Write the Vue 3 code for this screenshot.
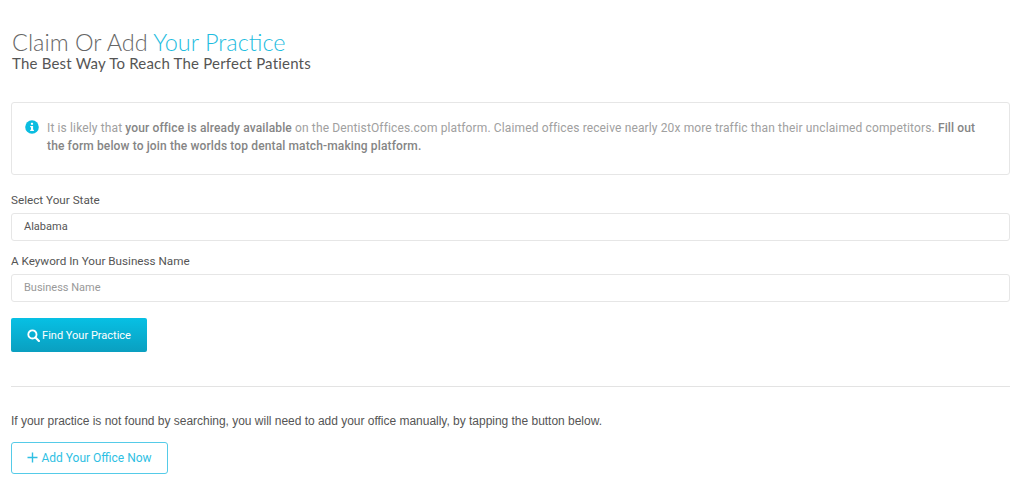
<template>
  <main class="page">
    <header class="head">
      <h1>Claim Or Add <span>Your Practice</span></h1>
      <h2>The Best Way To Reach The Perfect Patients</h2>
    </header>
    <section class="note">
      <svg class="info" viewBox="0 0 14 14" width="14" height="14" aria-hidden="true">
        <circle cx="7" cy="7" r="6.8" fill="#0bbde0" />
        <rect x="5.9" y="2.8" width="2.2" height="2" rx=".6" fill="#fff" />
        <path d="M5.2 6h2.9v3.7h.8v1.2H5.2V9.7h.8V7.2h-.8z" fill="#fff" />
      </svg>
      <p>It is likely that <b>your office is already available</b> on the DentistOffices.com platform. Claimed offices receive nearly 20x more traffic than their unclaimed competitors. <b>Fill out the form below to join the worlds top dental match-making platform.</b></p>
    </section>
    <label class="field">
      <span>Select Your State</span>
      <div class="input val">Alabama</div>
    </label>
    <label class="field second">
      <span>A Keyword In Your Business Name</span>
      <div class="input ph">Business Name</div>
    </label>
    <button class="find">
      <svg viewBox="0 0 12 12" width="13" height="13" aria-hidden="true">
        <circle cx="5" cy="5" r="3.8" fill="none" stroke="#fff" stroke-width="1.7" />
        <path d="M7.8 7.8l3.2 3.2" stroke="#fff" stroke-width="2" stroke-linecap="round" />
      </svg>
      Find Your Practice
    </button>
    <hr />
    <p class="manual">If your practice is not found by searching, you will need to add your office manually, by tapping the button below.</p>
    <button class="add">
      <svg viewBox="0 0 11 11" width="11" height="11" aria-hidden="true">
        <path d="M5.5.5v10M.5 5.5h10" stroke="#2fbfe3" stroke-width="1.4" />
      </svg>
      Add Your Office Now
    </button>
  </main>
</template>

<script setup>
</script>

<style>
html, body { margin: 0; background: #fff; }
</style>

<style scoped>
.page {
  box-sizing: border-box;
  width: 1024px;
  height: 500px;
  padding: 29px 14px 0 11px;
  font-family: Roboto, "Liberation Sans", sans-serif;
  font-size: 12px;
  color: #555;
  overflow: hidden;
}
h1 {
  margin: 0 0 0 1px;
  font-family: Lato, "Open Sans", sans-serif;
  font-weight: 300;
  font-size: 23.5px;
  line-height: 26px;
  color: #666;
}
h1 span { color: #1fbde0; }
h2 {
  margin: 0 0 0 1px;
  font-family: Lato, "Open Sans", sans-serif;
  font-weight: 400;
  font-size: 15px;
  line-height: 16px;
  color: #555;
  letter-spacing: .2px;
}
.note {
  box-sizing: border-box;
  margin-top: 31px;
  height: 73px;
  border: 1px solid #e6e6e6;
  border-radius: 3px;
  padding: 16px 30px 0 13px;
  display: flex;
  gap: 8px;
}
.info { flex: none; margin-top: 1px; }
.note p {
  margin: 0;
  line-height: 18px;
  color: #a0a0a0;
  letter-spacing: .13px;
}
.note b { font-weight: 500; color: #858585; }
.field { display: block; margin-top: 18px; color: #555; }
.field.second { margin-top: 13px; }
.field > span { display: block; line-height: 14px; font-size: 11.7px; }
.input {
  box-sizing: border-box;
  margin-top: 6px;
  height: 28px;
  border: 1px solid #e6e6e6;
  border-radius: 3px;
  padding: 0 12px;
  font-size: 11px;
  line-height: 26px;
}
.val { color: #555; }
.ph { color: #999; }
button {
  box-sizing: border-box;
  display: flex;
  align-items: center;
  font-family: inherit;
  cursor: pointer;
}
.find {
  margin-top: 16px;
  width: 136px;
  height: 34px;
  justify-content: center;
  gap: 2px;
  border: 0;
  border-radius: 2px;
  padding: 0;
  font-size: 11px;
  color: #fff;
  background: linear-gradient(#07c0e4, #0a9fc0);
}
hr {
  margin: 34px 0 0;
  border: 0;
  border-top: 1px solid #e3e3e3;
}
.manual {
  margin: 27px 0 0;
  font-family: "Liberation Sans", Arial, sans-serif;
  letter-spacing: -.02px;
  line-height: 15px;
  color: #555;
}
.add {
  margin-top: 13px;
  width: 157px;
  height: 32px;
  justify-content: center;
  gap: 3px;
  border: 1px solid #55cbe8;
  border-radius: 3px;
  padding: 0 0 1px;
  font-size: 12px;
  background: #fff;
  color: #2fbfe3;
}
</style>
